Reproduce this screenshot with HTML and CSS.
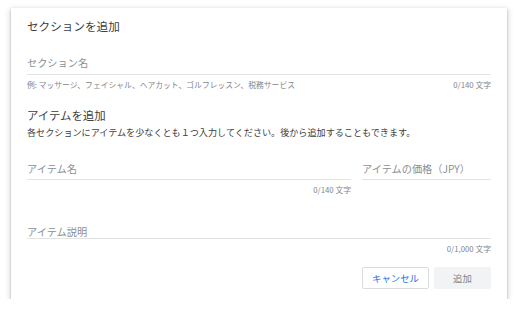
FILE: index.html
```html
<!DOCTYPE html>
<html lang="ja">
<head>
<meta charset="utf-8">
<link rel="stylesheet" href="styles.css">
</head>
<body>
<div class="card">
  <div class="title">セクションを追加</div>
  <div class="field">
    <div class="label">セクション名</div>
  </div>
  <div class="hint-row">
    <span>例: マッサージ、フェイシャル、ヘアカット、ゴルフレッスン、税務サービス</span>
    <span>0/140 文字</span>
  </div>
  <div class="title2">アイテムを追加</div>
  <div class="subtitle">各セクションにアイテムを少なくとも１つ入力してください。後から追加することもできます。</div>
  <div class="row">
    <div class="col-name">
      <div class="field-row">
        <div class="label">アイテム名</div>
      </div>
      <div class="hint-row right">
        <span>0/140 文字</span>
      </div>
    </div>
    <div class="col-price">
      <div class="field-row">
        <div class="label">アイテムの価格（JPY）</div>
      </div>
    </div>
  </div>
  <div class="field-desc">
    <div class="label">アイテム説明</div>
  </div>
  <div class="hint-row right">
    <span>0/1,000 文字</span>
  </div>
  <div class="actions">
    <button class="btn btn-cancel">キャンセル</button>
    <button class="btn btn-add">追加</button>
  </div>
</div>
</body>
</html>
```

FILE: styles.css
```css
html, body {
  margin: 0;
  padding: 0;
  background: #ffffff;
}
body {
  font-family: "Noto Sans CJK JP", "Noto Sans", sans-serif;
  color: #202124;
}
.card {
  margin: 8px 0 0 11px;
  width: 496px;
  height: 291px;
  box-sizing: border-box;
  padding: 10px 16px 0 16px;
  background: #fff;
  box-shadow: 0 1px 2px rgba(0,0,0,0.25), 0 2px 6px 1px rgba(0,0,0,0.15);
}
.title {
  font-size: 11.6px;
  line-height: 16px;
  height: 16px;
  color: #3c4043;
}
.field {
  margin-top: 22px;
  padding-bottom: 4px;
  border-bottom: 1px solid #e3e3e3;
}
.label {
  font-size: 10.2px;
  line-height: 14px;
  height: 14px;
  color: #8a8f94;
  white-space: nowrap;
}
.hint-row {
  margin-top: 5px;
  display: flex;
  justify-content: space-between;
  font-size: 7.8px;
  line-height: 10px;
  height: 10px;
  color: #80868b;
  white-space: nowrap;
}
.hint-row.right {
  justify-content: flex-end;
}
.title2 {
  margin-top: 18px;
  font-size: 11.4px;
  line-height: 15px;
  height: 15px;
  color: #3c4043;
}
.subtitle {
  margin-top: 3px;
  font-size: 9.1px;
  line-height: 12px;
  height: 12px;
  color: #3c4043;
  white-space: nowrap;
}
.row {
  margin-top: 24px;
  display: flex;
  gap: 11px;
}
.col-name {
  width: 324px;
}
.col-price {
  flex: 1;
}
.field-row {
  padding-bottom: 3px;
  border-bottom: 1px solid #e3e3e3;
}
.field-desc {
  margin-top: 31px;
  border-bottom: 1px solid #e3e3e3;
}
.field-desc .label {
  line-height: 12px;
  height: 12px;
}
.actions {
  margin-top: 13px;
  display: flex;
  justify-content: flex-end;
  gap: 5px;
}
.btn {
  height: 22px;
  box-sizing: border-box;
  font-family: "Noto Sans CJK JP", "Noto Sans", sans-serif;
  font-size: 9.4px;
  line-height: 20px;
  padding: 0;
  border-radius: 2px;
  cursor: pointer;
}
.btn-cancel {
  width: 67px;
  background: #fff;
  border: 1px solid #dadce0;
  color: #1a73e8;
}
.btn-add {
  width: 57px;
  background: #f1f3f4;
  border: 1px solid #f1f3f4;
  color: #80868b;
}
```
